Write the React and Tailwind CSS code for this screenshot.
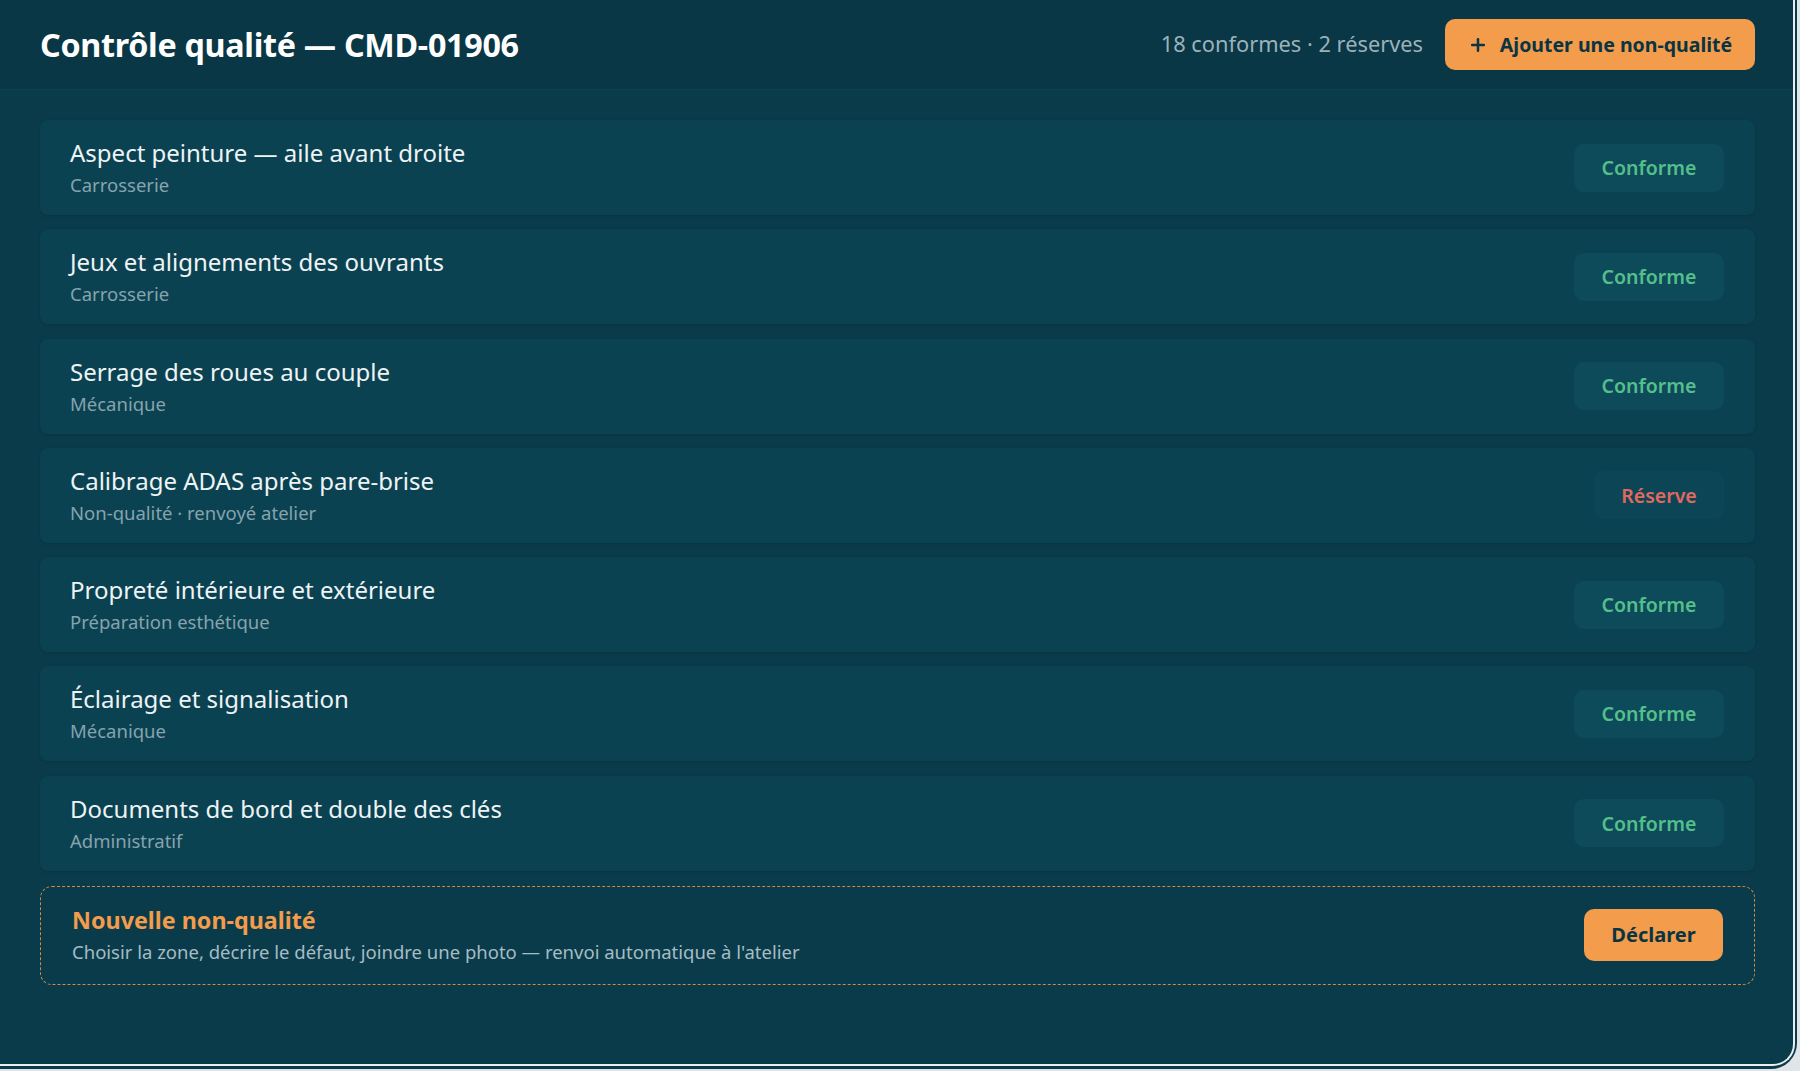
import { Plus } from 'lucide-react'

const checks = [
  { label: 'Aspect peinture — aile avant droite', group: 'Carrosserie', ok: true },
  { label: 'Jeux et alignements des ouvrants', group: 'Carrosserie', ok: true },
  { label: 'Serrage des roues au couple', group: 'Mécanique', ok: true },
  { label: 'Calibrage ADAS après pare-brise', group: 'Non-qualité · renvoyé atelier', ok: false },
  { label: 'Propreté intérieure et extérieure', group: 'Préparation esthétique', ok: true },
  { label: 'Éclairage et signalisation', group: 'Mécanique', ok: true },
  { label: 'Documents de bord et double des clés', group: 'Administratif', ok: true },
]

const CheckRow = ({ label, group, ok }) => (
  <div className="h-[95px] flex items-center justify-between pl-[30px] pr-[31px] rounded-lg bg-[#0b4251] shadow-[0_1px_3px_rgba(0,0,0,0.12)]">
    <div className="flex flex-col">
      <span className="text-[24px] leading-[32px] text-[#eef3f5]">{label}</span>
      <span className="text-[18.5px] leading-[26px] mt-[3px] text-[#86a3ae]">{group}</span>
    </div>
    {ok ? (
      <span className="w-[150px] h-[48px] flex items-center justify-center rounded-[10px] bg-[#0d4a5a] text-[19.5px] font-semibold text-[#55bf8b]">
        Conforme
      </span>
    ) : (
      <span className="w-[130px] h-[48px] flex items-center justify-center rounded-[10px] bg-[#0c4656] text-[19.5px] font-semibold text-[#e0695e]">
        Réserve
      </span>
    )}
  </div>
)

const App = () => {
  return (
    <div className="w-full h-[1071px] overflow-hidden bg-[#dfe5e8]" style={{ fontFamily: '"Noto Sans", Roboto, sans-serif' }}>
      <div className="w-[1797px] h-[1069px] bg-[#0a3b4a] rounded-br-[26px]">
        <div className="w-[1795px] h-[1066px] flex flex-col border-r-2 border-b-2 border-[#e9eff1] rounded-br-[22px]">
          {/* Header */}
          <div className="h-[90px] shrink-0 flex items-center justify-between pl-10 pr-[38px] bg-[#093745] border-b border-[#0c4150]">
            <h1 className="text-[32.3px] font-bold text-white tracking-[-0.3px]">Contrôle qualité — CMD-01906</h1>
            <div className="flex items-center gap-[22px]">
              <span className="text-[21.8px] text-[#9cb2bb]">18 conformes · 2 réserves</span>
              <button className="h-[51px] w-[310px] flex items-center justify-center gap-[12px] rounded-[10px] bg-[#f29c4c] text-[19.5px] font-bold text-[#0b3443]">
                <Plus size={20} strokeWidth={3} />
                Ajouter une non-qualité
              </button>
            </div>
          </div>

          {/* Checklist */}
          <div className="flex flex-col gap-[14.3px] pl-10 pr-[38px] pt-[30px]">
            {checks.map((c) => (
              <CheckRow key={c.label} {...c} />
            ))}
          </div>

          {/* New defect */}
          <div className="ml-10 mr-[38px] mt-[15px] h-[99px] flex items-center justify-between pl-[31px] pr-[31px] rounded-xl border border-dashed border-[#d08a45]">
            <div className="flex flex-col">
              <span className="text-[23.3px] leading-[30px] font-bold text-[#f29c4c]">Nouvelle non-qualité</span>
              <span className="text-[18.5px] leading-[26px] mt-[4px] text-[#a6bcc4]">
                Choisir la zone, décrire le défaut, joindre une photo — renvoi automatique à l'atelier
              </span>
            </div>
            <button className="w-[139px] h-[52px] rounded-[10px] bg-[#f29c4c] text-[20px] font-bold text-[#0b3443]">
              Déclarer
            </button>
          </div>
        </div>
      </div>
    </div>
  )
}

export default App
